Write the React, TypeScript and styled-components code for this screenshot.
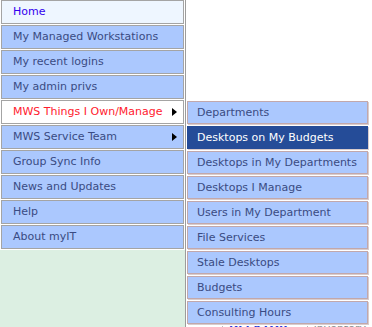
import React from 'react';
import styled, { createGlobalStyle, css } from 'styled-components';

const GlobalStyle = createGlobalStyle`
  html, body {
    margin: 0;
    padding: 0;
    background: #ffffff;
  }
  body {
    font-family: 'DejaVu Sans', Verdana, sans-serif;
    font-size: 11px;
  }
`;

type Variant = 'home' | 'normal' | 'hover';

const Page = styled.div`
  position: relative;
  display: flex;
  min-height: 100vh;
`;

const Sidebar = styled.nav`
  flex: none;
  width: 185px;
  border-right: 1px solid #9c9c9c;
  background: #dcefe2;
`;

const MenuList = styled.ul`
  list-style: none;
  margin: 0;
  padding: 0 1px 1px 1px;
  background: #ffffff;
`;

const MenuItem = styled.li<{ $variant: Variant }>`
  position: relative;
  box-sizing: border-box;
  height: 24px;
  margin-bottom: 1px;
  padding-left: 11px;
  border: 1px solid #a4a4a4;
  line-height: 22px;
  white-space: nowrap;
  background: #abc8fe;
  color: #3a4b82;
  ${(p) =>
    p.$variant === 'home' &&
    css`
      background: #eef6ff;
      color: #3300ee;
    `}
  ${(p) =>
    p.$variant === 'hover' &&
    css`
      background: #ffffff;
      color: #ff1a2e;
    `}
  &:last-child {
    margin-bottom: 0;
  }
`;

const Arrow = styled.span`
  position: absolute;
  right: 6px;
  top: 7px;
  width: 0;
  height: 0;
  border-left: 5px solid #000000;
  border-top: 4.5px solid transparent;
  border-bottom: 4.5px solid transparent;
`;

const Flyout = styled.ul`
  position: absolute;
  left: 186px;
  top: 100px;
  width: 183px;
  list-style: none;
  margin: 0;
  padding: 1px 0 0 1px;
  background: #ffffff;
  z-index: 10;
`;

const FlyoutItem = styled.li<{ $selected?: boolean }>`
  box-sizing: border-box;
  width: 181px;
  height: 23px;
  margin-bottom: 2px;
  padding-left: 9px;
  border: 1px solid #c2a8ab;
  box-shadow: 1px 1px 0 #d9cccd;
  line-height: 21px;
  white-space: nowrap;
  background: ${(p) => (p.$selected ? '#254c98' : '#abc8fe')};
  color: ${(p) => (p.$selected ? '#ffffff' : '#3a4b82')};
  ${(p) =>
    p.$selected &&
    css`
      border-color: #254c98;
    `}
`;

const Main = styled.main`
  flex: 1;
  padding: 320px 0 0 36px;
`;

const Table = styled.table`
  border-collapse: collapse;
`;

const Cell = styled.td<{ $link?: boolean }>`
  border-left: 1px solid #b8b8b8;
  padding: 2px 6px;
  font-size: 11px;
  white-space: nowrap;
  vertical-align: top;
  color: ${(p) => (p.$link ? '#2a36d8' : '#8a8a8a')};
  font-weight: ${(p) => (p.$link ? 'bold' : 'normal')};
  text-decoration: ${(p) => (p.$link ? 'underline' : 'none')};
  width: ${(p) => (p.$link ? '87px' : 'auto')};
`;

const mainMenu: { label: string; variant: Variant; sub?: boolean }[] = [
  { label: 'Home', variant: 'home' },
  { label: 'My Managed Workstations', variant: 'normal' },
  { label: 'My recent logins', variant: 'normal' },
  { label: 'My admin privs', variant: 'normal' },
  { label: 'MWS Things I Own/Manage', variant: 'hover', sub: true },
  { label: 'MWS Service Team', variant: 'normal', sub: true },
  { label: 'Group Sync Info', variant: 'normal' },
  { label: 'News and Updates', variant: 'normal' },
  { label: 'Help', variant: 'normal' },
  { label: 'About myIT', variant: 'normal' },
];

const subMenu = [
  'Departments',
  'Desktops on My Budgets',
  'Desktops in My Departments',
  'Desktops I Manage',
  'Users in My Department',
  'File Services',
  'Stale Desktops',
  'Budgets',
  'Consulting Hours',
];

export default function App() {
  return (
    <>
      <GlobalStyle />
      <Page>
        <Sidebar>
          <MenuList>
            {mainMenu.map((m) => (
              <MenuItem key={m.label} $variant={m.variant}>
                {m.label}
                {m.sub && <Arrow />}
              </MenuItem>
            ))}
          </MenuList>
        </Sidebar>
        <Main>
          <Table>
            <tbody>
              <tr>
                <Cell $link>DESKTOP</Cell>
                <Cell>inventory</Cell>
              </tr>
            </tbody>
          </Table>
        </Main>
        <Flyout>
          {subMenu.map((s) => (
            <FlyoutItem key={s} $selected={s === 'Desktops on My Budgets'}>
              {s}
            </FlyoutItem>
          ))}
        </Flyout>
      </Page>
    </>
  );
}
